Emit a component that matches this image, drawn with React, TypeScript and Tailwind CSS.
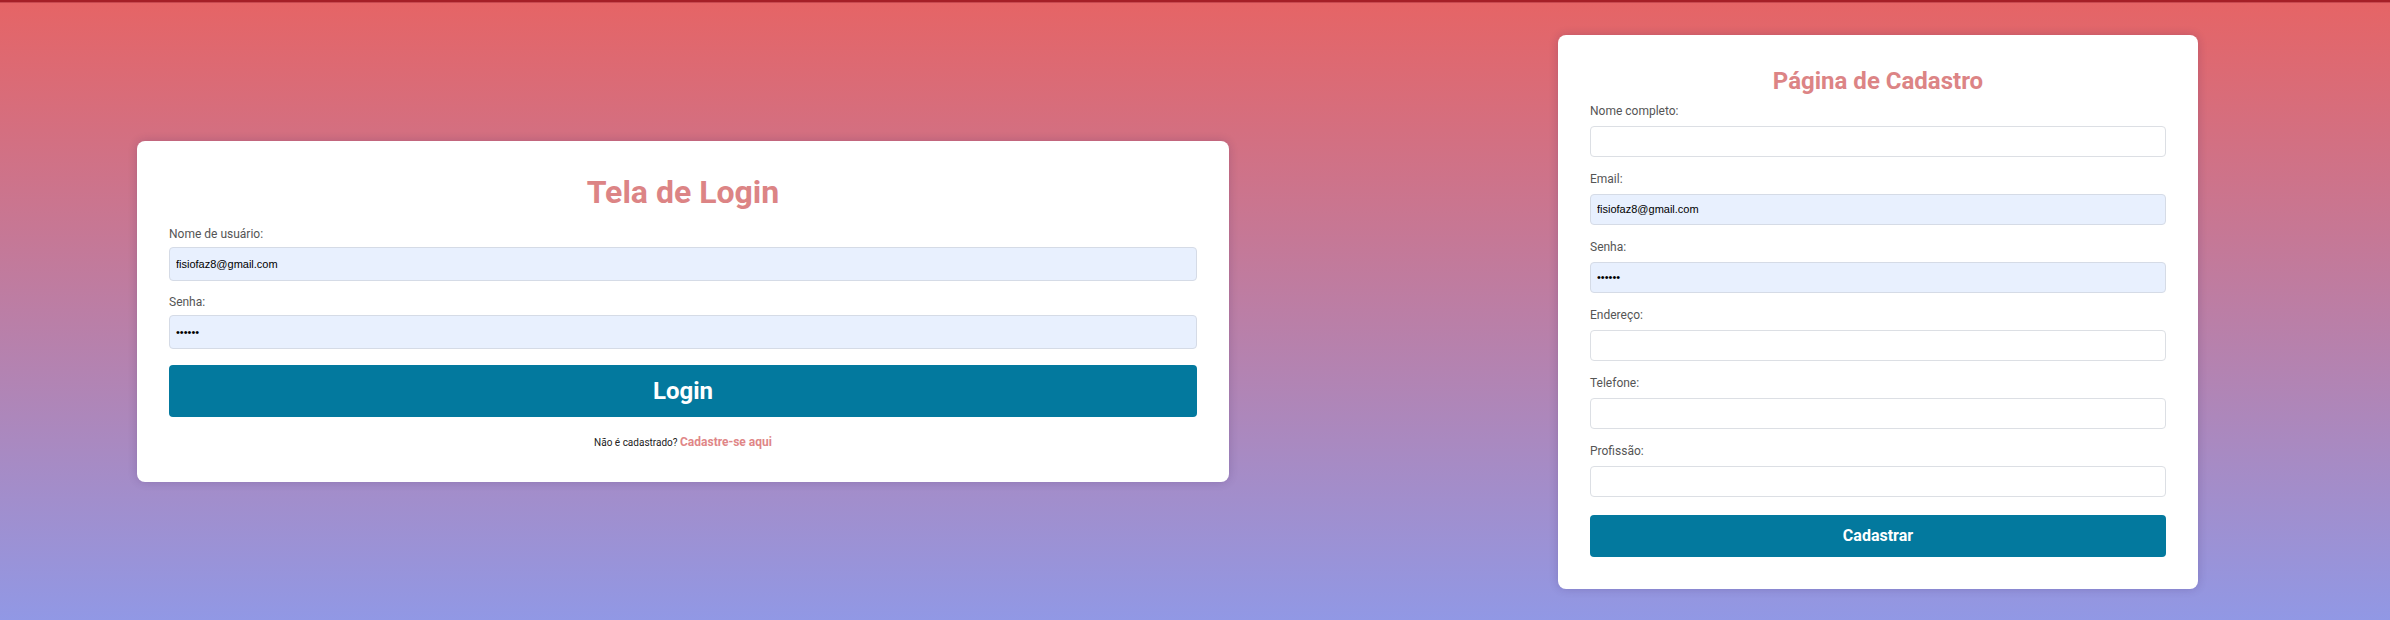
import React from "react";

const roboto = { fontFamily: 'Roboto, "Liberation Sans", Arial, sans-serif' };

function Field({
  label,
  value,
  type = "text",
  filled = false,
  h = "h-[31px]",
  gap = "mb-[8px]",
}: {
  label: string;
  value?: string;
  type?: string;
  filled?: boolean;
  h?: string;
  gap?: string;
}) {
  return (
    <div className="flex flex-col">
      <label className={`block text-[12px] leading-[14px] text-[#555555] ${gap}`}>{label}</label>
      <input
        type={type}
        readOnly
        defaultValue={value}
        className={`${h} w-full rounded-[4px] border px-[6px] text-[11px] text-black outline-none ${
          filled ? "bg-[#e8f0fe] border-[#d5dbe6]" : "bg-white border-[#dcdfe4]"
        }`}
        style={{ fontFamily: '"Liberation Sans", Arial, sans-serif' }}
      />
    </div>
  );
}

export default function App() {
  return (
    <div
      className="w-[2390px] h-[620px] flex flex-col bg-[linear-gradient(to_bottom,#e66465,#9198e5)]"
      style={roboto}
    >
      <div className="h-[2px] bg-[#a51f27]" />
      <div className="h-[1px] bg-[#c84a50]" />
      <div className="flex-1 flex items-center pl-[137px]">
        {/* Login card */}
        <div className="w-[1092px] bg-white rounded-lg p-8 shadow-[0_0_10px_rgba(40,20,80,0.2)]">
          <h1 className="text-center text-[32px] leading-[38px] font-bold text-[#dc8485] mb-4">
            Tela de Login
          </h1>
          <div className="flex flex-col gap-[14px]">
            <Field label="Nome de usuário:" value="fisiofaz8@gmail.com" filled h="h-[34px]" gap="mb-[6px]" />
            <Field label="Senha:" value="123456" type="password" filled h="h-[34px]" gap="mb-[6px]" />
          </div>
          <button className="mt-4 w-full h-[52px] rounded-[4px] bg-[#03799e] text-white text-[24px] font-bold">
            Login
          </button>
          <p className="mt-4 text-center leading-[15px]">
            <span className="text-[10px] text-[#222222]">Não é cadastrado? </span>
            <span className="text-[12px] font-bold text-[#e08687]">Cadastre-se aqui</span>
          </p>
        </div>

        {/* Register card */}
        <div className="ml-[329px] w-[640px] bg-white rounded-lg p-8 shadow-[0_0_10px_rgba(40,20,80,0.2)]">
          <h2 className="text-center text-[24px] leading-[28px] font-bold text-[#dc8485] mb-[9px]">
            Página de Cadastro
          </h2>
          <div className="flex flex-col gap-[15px]">
            <Field label="Nome completo:" />
            <Field label="Email:" value="fisiofaz8@gmail.com" filled />
            <Field label="Senha:" value="123456" type="password" filled />
            <Field label="Endereço:" />
            <Field label="Telefone:" />
            <Field label="Profissão:" />
          </div>
          <button className="mt-[18px] w-full h-[42px] rounded-[4px] bg-[#03799e] text-white text-[16px] font-bold">
            Cadastrar
          </button>
        </div>
      </div>
    </div>
  );
}
